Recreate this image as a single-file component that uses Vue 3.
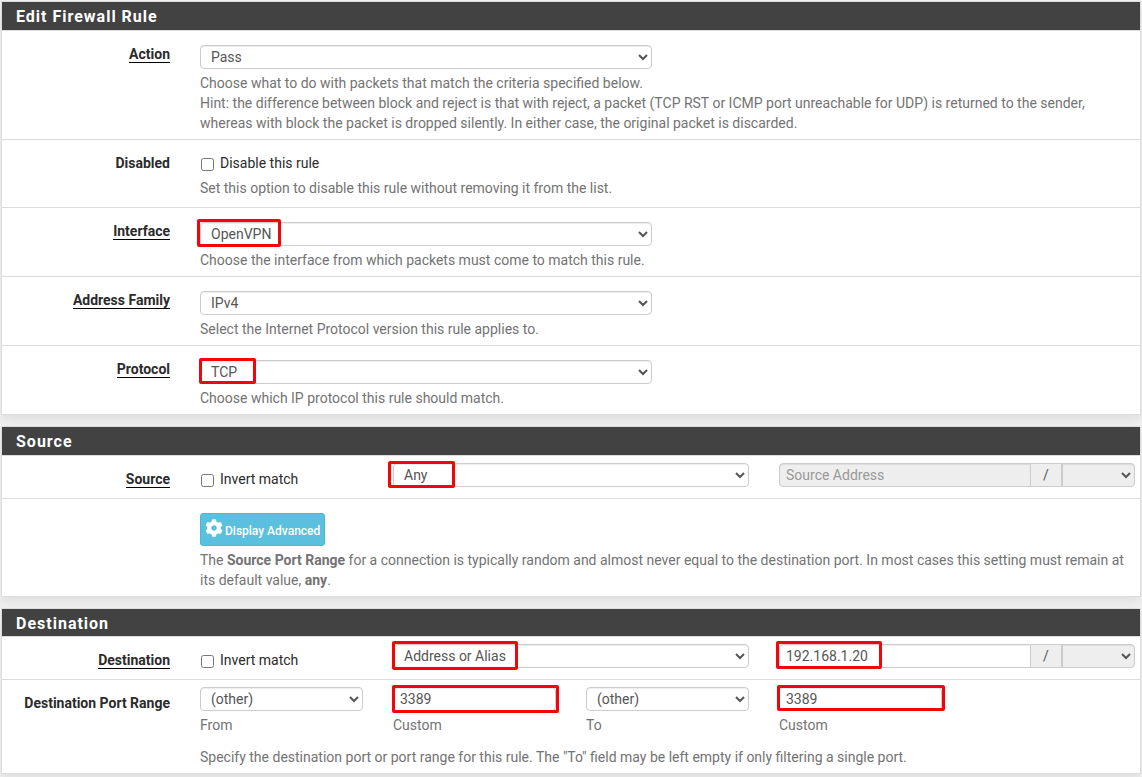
<template>
  <div class="page">
    <section class="panel">
      <h2 class="panel-title">Edit Firewall Rule</h2>

      <div class="row row-action">
        <div class="label"><span class="required">Action</span></div>
        <div class="content">
          <div class="field half">
            <select v-model="rule.action" class="control">
              <option>Pass</option>
              <option>Block</option>
              <option>Reject</option>
            </select>
          </div>
          <p class="help">
            Choose what to do with packets that match the criteria specified below.<br>
            Hint: the difference between block and reject is that with reject, a packet (TCP RST or ICMP port unreachable for UDP) is returned to the sender, whereas with block the packet is dropped silently. In either case, the original packet is discarded.
          </p>
        </div>
      </div>

      <div class="row row-disabled">
        <div class="label"><span>Disabled</span></div>
        <div class="content">
          <label class="check"><input v-model="rule.disabled" type="checkbox"><span>Disable this rule</span></label>
          <p class="help">Set this option to disable this rule without removing it from the list.</p>
        </div>
      </div>

      <div v-for="item in options" :key="item.key" class="row">
        <div class="label"><span class="required">{{ item.label }}</span></div>
        <div class="content">
          <div class="field half">
            <select v-model="rule[item.key]" class="control">
              <option v-for="choice in item.choices" :key="choice">{{ choice }}</option>
            </select>
            <span v-if="item.marked" class="mark" :class="'mark-' + item.key"></span>
          </div>
          <p class="help">{{ item.help }}</p>
        </div>
      </div>
    </section>

    <section class="panel">
      <h2 class="panel-title">Source</h2>

      <div class="row row-address">
        <div class="label"><span class="required">Source</span></div>
        <div class="columns">
          <label class="check"><input v-model="rule.sourceInvert" type="checkbox"><span>Invert match</span></label>
          <div class="field wide">
            <select v-model="rule.source" class="control">
              <option>Any</option>
              <option>Address or Alias</option>
            </select>
            <span class="mark mark-source"></span>
          </div>
          <div class="field wide group">
            <input class="control" type="text" placeholder="Source Address" disabled>
            <span class="addon">/</span>
            <select class="control mask" disabled></select>
          </div>
        </div>
      </div>

      <div class="row row-advanced">
        <div class="label"></div>
        <div class="content">
          <button type="button" class="btn-info">
            <svg width="18" height="18" viewBox="0 0 512 512" aria-hidden="true">
              <path fill="currentColor" d="M487.4 315.7l-42.6-24.6c4.3-23.2 4.3-47 0-70.2l42.6-24.6c4.9-2.8 7.1-8.6 5.5-14-11.1-35.6-30-67.8-54.7-94.6-3.8-4.1-10-5.1-14.8-2.3L380.8 110c-17.9-15.4-38.5-27.3-60.8-35.1V25.8c0-5.6-3.9-10.5-9.4-11.7-36.7-8.2-74.3-7.8-109.2 0-5.5 1.2-9.4 6.1-9.4 11.7V75c-22.2 7.9-42.8 19.8-60.8 35.1L88.7 85.5c-4.9-2.8-11-1.9-14.8 2.3-24.7 26.7-43.6 58.9-54.7 94.6-1.7 5.4.6 11.2 5.5 14L67.3 221c-4.3 23.2-4.3 47 0 70.2l-42.6 24.6c-4.9 2.8-7.1 8.6-5.5 14 11.1 35.6 30 67.8 54.7 94.6 3.8 4.1 10 5.1 14.8 2.3l42.6-24.6c17.9 15.4 38.5 27.3 60.8 35.1v49.2c0 5.6 3.9 10.5 9.4 11.7 36.7 8.2 74.3 7.8 109.2 0 5.5-1.2 9.4-6.1 9.4-11.7v-49.2c22.2-7.9 42.8-19.8 60.8-35.1l42.6 24.6c4.9 2.8 11 1.9 14.8-2.3 24.7-26.7 43.6-58.9 54.7-94.6 1.5-5.5-.7-11.3-5.6-14.1zM256 336c-44.1 0-80-35.9-80-80s35.9-80 80-80 80 35.9 80 80-35.9 80-80 80z" />
            </svg>
            <span>Display Advanced</span>
          </button>
          <p class="help">
            The <b>Source Port Range</b> for a connection is typically random and almost never equal to the destination port. In most cases this setting must remain at its default value, <b>any</b>.
          </p>
        </div>
      </div>
    </section>

    <section class="panel panel-destination">
      <h2 class="panel-title">Destination</h2>

      <div class="row row-address">
        <div class="label"><span class="required">Destination</span></div>
        <div class="columns">
          <label class="check"><input v-model="rule.destinationInvert" type="checkbox"><span>Invert match</span></label>
          <div class="field wide">
            <select v-model="rule.destination" class="control">
              <option>Any</option>
              <option>Address or Alias</option>
            </select>
            <span class="mark mark-destination"></span>
          </div>
          <div class="field wide group">
            <input v-model="rule.address" class="control" type="text">
            <span class="addon">/</span>
            <select class="control mask" disabled></select>
            <span class="mark mark-address"></span>
          </div>
        </div>
      </div>

      <div class="row row-ports">
        <div class="label"><span>Destination Port Range</span></div>
        <div class="content">
          <div class="columns">
            <div v-for="port in ports" :key="port.key" class="field">
              <select v-if="port.select" v-model="rule[port.key]" class="control">
                <option>(other)</option>
              </select>
              <input v-else v-model="rule[port.key]" class="control" type="text">
              <span v-if="!port.select" class="mark" :class="'mark-' + port.key"></span>
              <p class="help">{{ port.label }}</p>
            </div>
          </div>
          <p class="help help-ports">Specify the destination port or port range for this rule. The "To" field may be left empty if only filtering a single port.</p>
        </div>
      </div>
    </section>
  </div>
</template>

<script setup>
import { reactive } from 'vue'

const rule = reactive({
  action: 'Pass',
  disabled: false,
  interface: 'OpenVPN',
  family: 'IPv4',
  protocol: 'TCP',
  sourceInvert: false,
  source: 'Any',
  destinationInvert: false,
  destination: 'Address or Alias',
  address: '192.168.1.20',
  from: '(other)',
  fromPort: '3389',
  to: '(other)',
  toPort: '3389'
})

const options = [
  { key: 'interface', label: 'Interface', choices: ['OpenVPN', 'WAN', 'LAN'], marked: true, help: 'Choose the interface from which packets must come to match this rule.' },
  { key: 'family', label: 'Address Family', choices: ['IPv4', 'IPv6'], marked: false, help: 'Select the Internet Protocol version this rule applies to.' },
  { key: 'protocol', label: 'Protocol', choices: ['TCP', 'UDP'], marked: true, help: 'Choose which IP protocol this rule should match.' }
]

const ports = [
  { key: 'from', label: 'From', select: true },
  { key: 'fromPort', label: 'Custom', select: false },
  { key: 'to', label: 'To', select: true },
  { key: 'toPort', label: 'Custom', select: false }
]
</script>

<style>
body {
  background: #f1f1f1;
}
</style>

<style scoped>
* {
  box-sizing: border-box;
}

.page {
  height: 777px;
  padding: 1px 1px 0;
  overflow: hidden;
  font-family: Roboto, "Liberation Sans", sans-serif;
  font-size: 14px;
  line-height: 20px;
  color: #2b2b2b;
}

/* PANELS */
.panel {
  margin-bottom: 11px;
  border: 1px solid #ddd;
  background: #fff;
  box-shadow: 0 5px 10px rgba(0, 0, 0, 0.08);
}

.panel-title {
  height: 29px;
  margin: 0;
  padding: 0 14px;
  border-bottom: 1px solid #ddd;
  background: #424242;
  background-clip: padding-box;
  color: #fff;
  font-size: 16px;
  font-weight: 700;
  line-height: 29px;
  letter-spacing: 1px;
}

.panel-destination .panel-title {
  height: 28px;
}

/* ROWS */
.row {
  display: grid;
  grid-template-columns: 168px 1fr;
  column-gap: 30px;
  min-height: 69px;
  padding: 14px 5px 0 0;
  border-bottom: 1px solid #ddd;
}

.row:last-child {
  min-height: 68px;
  border-bottom: 0;
}

.row-action {
  height: 109px;
}

.row-disabled {
  min-height: 68px;
  height: 68px;
}

.row-address {
  min-height: 43px;
  padding-top: 7px;
}

.row.row-advanced {
  height: 97px;
}

.row.row-ports {
  height: 93px;
  padding-top: 7px;
}

.label {
  margin-top: -1px;
  text-align: right;
  font-weight: 700;
}

.label span {
  display: inline-block;
  line-height: 16px;
}

.label .required {
  border-bottom: 1px solid #000;
}

.row-address .label,
.row-ports .label {
  padding-top: 7px;
}

/* FIELDS */
.columns {
  display: grid;
  grid-template-columns: repeat(4, 163px);
  column-gap: 30px;
}

.field {
  position: relative;
}

.half {
  width: 452px;
}

.wide {
  width: 356px;
}

.row-address .columns {
  grid-template-columns: 163px 356px 356px;
}

.control {
  display: block;
  width: 100%;
  height: 24px;
  margin: 0;
  padding: 0 6px;
  border: 1px solid #ccc;
  border-radius: 4px;
  background-color: #fff;
  box-shadow: inset 0 1px 1px rgba(0, 0, 0, 0.075);
  color: #555;
  font: inherit;
}

.control:disabled {
  background-color: #eee;
  opacity: 1;
}

.control::placeholder {
  color: #999;
}

.group {
  display: flex;
}

.group input {
  width: 252px;
  border-radius: 4px 0 0 4px;
}

.addon {
  width: 31px;
  height: 24px;
  border: solid #ccc;
  border-width: 1px 1px 1px 0;
  background: #eee;
  color: #555;
  line-height: 22px;
  text-align: center;
}

.group .mask {
  width: 73px;
  border-radius: 0 4px 4px 0;
}

.check {
  display: flex;
  align-items: flex-start;
  gap: 6px;
}

.check input {
  width: 13px;
  height: 13px;
  margin: 5px 0 0 1px;
}

.row-disabled .check {
  margin: -1px 0 5px;
}

.row-address .check {
  padding-top: 6px;
}

.help {
  margin: 4px 0 0;
  color: #737373;
}

.help-ports {
  margin-top: 12px;
}

.btn-info {
  display: flex;
  align-items: center;
  gap: 3px;
  width: 125px;
  height: 33px;
  padding: 0 4px;
  border: 1px solid #46b8da;
  border-radius: 3px;
  background: #5bc0de;
  color: #fff;
  font: 500 12px/18px Roboto, sans-serif;
  white-space: nowrap;
}

.btn-info svg {
  flex: none;
  margin: -4px 0 0;
}

.btn-info span {
  margin: 3px 0 0 -1px;
}

/* HIGHLIGHTS */
.mark {
  position: absolute;
  border: 3px solid #f30509;
  border-radius: 2px;
  pointer-events: none;
}

.mark-interface {
  top: -3px;
  left: -3px;
  width: 84px;
  height: 28px;
}

.mark-protocol {
  top: -2px;
  left: -1px;
  width: 57px;
  height: 26px;
}

.mark-source {
  top: -2px;
  left: -5px;
  width: 67px;
  height: 27px;
}

.mark-destination {
  top: -3px;
  left: -1px;
  width: 126px;
  height: 29px;
}

.mark-address {
  top: -3px;
  left: -3px;
  width: 106px;
  height: 28px;
}

.mark-fromPort {
  top: -2px;
  left: -1px;
  width: 167px;
  height: 28px;
}

.mark-toPort {
  top: -2px;
  left: -2px;
  width: 168px;
  height: 26px;
}
</style>
